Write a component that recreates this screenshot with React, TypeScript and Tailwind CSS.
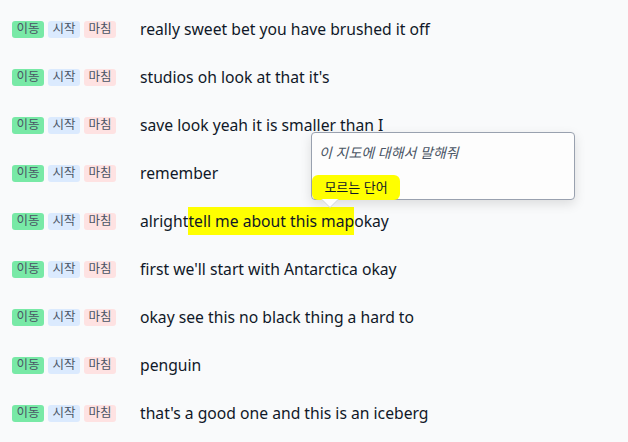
import React from "react";

const lines = [
  "really sweet bet you have brushed it off",
  "studios oh look at that it's",
  "save look yeah it is smaller than I",
  "remember",
  "__highlight__",
  "first we'll start with Antarctica okay",
  "okay see this no black thing a hard to",
  "penguin",
  "that's a good one and this is an iceberg",
];

function Badges() {
  return (
    <div className="flex items-center gap-[4px] text-[12.5px] leading-none text-gray-600">
      <span className="flex h-[17px] w-[32px] items-center justify-center rounded-[3px] bg-[#78e9a6]">이동</span>
      <span className="flex h-[17px] w-[32px] items-center justify-center rounded-[3px] bg-[#dbeafe]">시작</span>
      <span className="flex h-[17px] w-[32px] items-center justify-center rounded-[3px] bg-[#fee2e2]">마침</span>
    </div>
  );
}

function Popup() {
  return (
    <div className="absolute left-[299px] top-[-65px] z-10">
      <div className="relative h-[68px] w-[264px] rounded-[4px] border border-gray-400 bg-[#fdfdfd] shadow-[0_4px_12px_rgba(0,0,0,0.12)]">
        <div className="px-[7px] pt-[9px] text-[14px] italic text-gray-600">이 지도에 대해서 말해줘</div>
        <button
          type="button"
          className="absolute left-0 top-[42px] h-[25px] w-[88px] rounded-[6px] bg-[#ffff00] text-[13px] text-gray-900"
        >
          모르는 단어
        </button>
        <div className="absolute left-[9px] top-[66px] h-0 w-0 border-x-[9px] border-t-[9px] border-x-transparent border-t-gray-300" />
        <div className="absolute left-[10px] top-[66px] h-0 w-0 border-x-[8px] border-t-[8px] border-x-transparent border-t-white" />
      </div>
    </div>
  );
}

export default function App() {
  return (
    <div
      className="min-h-[442px] bg-[#f9fafb] pt-[5px] pl-[12px]"
      style={{ fontFamily: '"Noto Sans", "Noto Sans CJK KR", sans-serif' }}
    >
      {lines.map((line, i) => (
        <div key={i} className="relative flex h-[48px] items-center">
          <Badges />
          <div className="ml-[24px] mt-[2px] text-[15.7px] text-gray-900">
            {line === "__highlight__" ? (
              <>
                alright<span className="bg-[#ffff00] py-[3px]">tell me about this map</span>okay
              </>
            ) : (
              line
            )}
          </div>
          {line === "__highlight__" && <Popup />}
        </div>
      ))}
    </div>
  );
}
